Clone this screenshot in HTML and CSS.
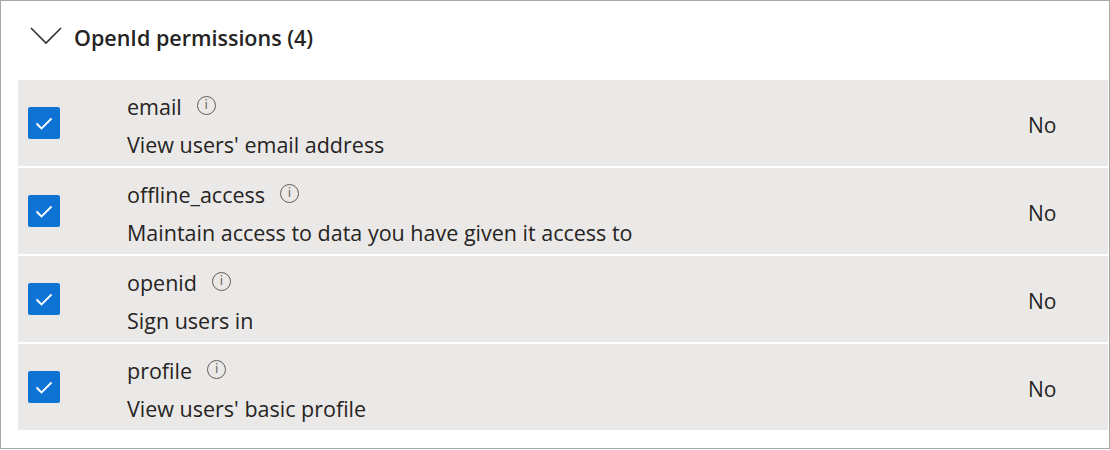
FILE: index.html
```html
<!DOCTYPE html>
<html>
<head>
<meta charset="utf-8">
<link rel="stylesheet" href="styles.css">
</head>
<body>
<div class="frame">
  <div class="header">
    <svg class="chevron" width="32" height="18" viewBox="0 0 32 18"><path d="M1 1 L16 16 L31 1" fill="none" stroke="#323130" stroke-width="1.6"/></svg>
    <span class="title">OpenId permissions (4)</span>
  </div>
  <div class="rows">
    <div class="row">
      <div class="check"><svg width="32" height="32" viewBox="0 0 32 32"><path d="M8.5 16.5 L13.5 21.5 L23.5 11.5" fill="none" stroke="#fff" stroke-width="1.8"/></svg></div>
      <div class="info">
        <div class="name">email <span class="i">i</span></div>
        <div class="desc">View users' email address</div>
      </div>
      <div class="consent">No</div>
    </div>
    <div class="row">
      <div class="check"><svg width="32" height="32" viewBox="0 0 32 32"><path d="M8.5 16.5 L13.5 21.5 L23.5 11.5" fill="none" stroke="#fff" stroke-width="1.8"/></svg></div>
      <div class="info">
        <div class="name">offline_access <span class="i">i</span></div>
        <div class="desc">Maintain access to data you have given it access to</div>
      </div>
      <div class="consent">No</div>
    </div>
    <div class="row">
      <div class="check"><svg width="32" height="32" viewBox="0 0 32 32"><path d="M8.5 16.5 L13.5 21.5 L23.5 11.5" fill="none" stroke="#fff" stroke-width="1.8"/></svg></div>
      <div class="info">
        <div class="name">openid <span class="i">i</span></div>
        <div class="desc">Sign users in</div>
      </div>
      <div class="consent">No</div>
    </div>
    <div class="row">
      <div class="check"><svg width="32" height="32" viewBox="0 0 32 32"><path d="M8.5 16.5 L13.5 21.5 L23.5 11.5" fill="none" stroke="#fff" stroke-width="1.8"/></svg></div>
      <div class="info">
        <div class="name">profile <span class="i">i</span></div>
        <div class="desc">View users' basic profile</div>
      </div>
      <div class="consent">No</div>
    </div>
  </div>
</div>
</body>
</html>
```
FILE: styles.css
```css
html, body { margin: 0; padding: 0; background: #fff; }
body { font-family: "Open Sans", "Noto Sans", sans-serif; color: #201f1e; }
.frame {
  width: 1110px; height: 449px; box-sizing: border-box;
  border: 1px solid #a8a8a8;
  padding: 0 1px 0 17px;
}
.header {
  height: 78px; display: flex; align-items: center;
  padding-left: 12px; gap: 12px;
}
.chevron { margin-top: -8px; }
.title { font-size: 21.5px; font-weight: 600; color: #252423; margin-top: -6px; }
.rows { display: flex; flex-direction: column; gap: 2px; margin-top: 1px; }
.row {
  height: 86px; background: #ebe9e7; display: flex; align-items: center;
}
.check {
  width: 32px; height: 32px; background: #0f73d6; border-radius: 2px;
  margin-left: 10px; margin-right: 67px; flex: none;
}
.check svg { display: block; }
.info { flex: 1; display: flex; flex-direction: column; gap: 9px; padding-top: 4px; }
.name, .desc { font-size: 21.5px; line-height: 29px; color: #252423; }
.name { display: flex; align-items: center; gap: 15px; }
.i {
  width: 17px; height: 17px; border: 1px solid #605e5c; border-radius: 50%;
  font-size: 12px; line-height: 17px; text-align: center; color: #605e5c;
  font-family: "DejaVu Sans", sans-serif; margin-top: -1px;
}
.consent { font-size: 21px; width: 80px; color: #252423; padding-top: 4px; }
```
